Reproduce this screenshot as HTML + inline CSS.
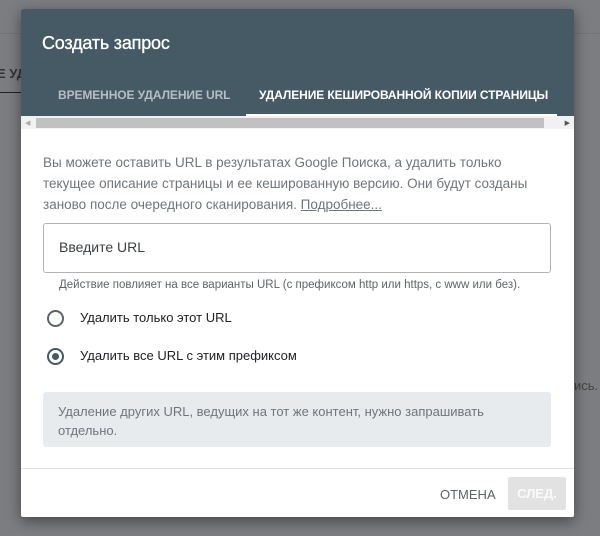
<!DOCTYPE html>
<html><head><meta charset="utf-8"><style>
body{margin:0;width:600px;height:536px;background:#7c7d80;font-family:"Liberation Sans",sans-serif;position:relative;overflow:hidden}
.bg{position:absolute;color:#2a2a2a}
.dlg{position:absolute;left:21px;top:9px;width:553px;height:508px;background:#fff;box-shadow:0 4px 14px rgba(0,0,0,.45);border-radius:2px;overflow:hidden}
.hd{background:#465a66;height:107px;position:relative}
.hd h1{margin:0;position:absolute;left:21px;top:24px;font-size:18px;font-weight:normal;color:#fff;letter-spacing:-.2px;-webkit-text-stroke:.3px #fff}
.tab{position:absolute;top:79px;font-size:12px;font-weight:bold;letter-spacing:-.1px}
.ul{position:absolute;left:225px;top:105px;width:311px;height:2px;background:#fff}
.sb{position:absolute;left:0;top:107px;width:553px;height:13px;background:#f1f1f1}
.th{position:absolute;left:15px;top:2px;width:508px;height:10px;background:#c1c1c1}
.t{position:absolute;color:#70757a}
.inp{position:absolute;left:22px;top:214px;width:506px;height:48px;border:1px solid #b0b3b7;border-radius:3px}
.rad{position:absolute;left:26px;width:13px;height:13px;border:2px solid #5f6368;border-radius:50%}
.box{position:absolute;left:22px;top:383px;width:508px;height:55px;background:#e8ebee;border-radius:3px}
</style></head><body>
<div class="bg" style="left:0;top:33px;width:600px;height:1px;background:#737477"></div>
<div class="bg" style="left:-3px;top:66px;font-size:13px;font-weight:bold;color:#333">Е УД</div>
<div class="bg" style="left:0;top:92px;width:21px;height:1px;background:#222"></div>
<div class="bg" style="left:574px;top:378px;font-size:13px;color:#444">ись.</div>
<div class="dlg">
 <div class="hd"><h1>Создать запрос</h1>
  <div class="tab" style="left:37px;color:#b4bfc5">ВРЕМЕННОЕ УДАЛЕНИЕ URL</div>
  <div class="tab" style="left:238px;color:#fff">УДАЛЕНИЕ КЕШИРОВАННОЙ КОПИИ СТРАНИЦЫ</div>
  <div class="ul"></div></div>
 <div class="sb"><div class="th"></div><div style="position:absolute;left:4px;top:3px;font-size:7px;color:#aaa">◀</div><div style="position:absolute;right:4px;top:3px;font-size:7px;color:#555">▶</div></div>
 <div class="t" style="left:22px;top:143px;width:500px;font-size:13.5px;line-height:21px">Вы можете оставить URL в результатах Google Поиска, а удалить только текущее описание страницы и ее кешированную версию. Они будут созданы заново после очередного сканирования. <u>Подробнее...</u></div>
 <div class="inp"><div style="position:absolute;left:15px;top:15px;font-size:14px;color:#3c4043">Введите URL</div></div>
 <div class="t" style="left:38px;top:270px;font-size:11.5px;color:#5f6368">Действие повлияет на все варианты URL (с префиксом http или https, с www или без).</div>
 <div class="rad" style="top:301px"></div>
 <div class="t" style="left:59px;top:301px;font-size:13px;color:#202124">Удалить только этот URL</div>
 <div class="rad" style="top:339px;border-color:#455a64"><div style="position:absolute;left:3px;top:3px;width:7px;height:7px;border-radius:50%;background:#455a64"></div></div>
 <div class="t" style="left:59px;top:339px;font-size:13px;color:#202124">Удалить все URL с этим префиксом</div>
 <div class="box"><div class="t" style="left:15px;top:10px;font-size:13px;line-height:19px;width:480px">Удаление других URL, ведущих на тот же контент, нужно запрашивать отдельно.</div></div>
 <div style="position:absolute;left:0;top:459px;width:553px;height:1px;background:#e0e0e0"></div>
 <div class="t" style="left:419px;top:478px;font-size:13px;color:#5f6368">ОТМЕНА</div>
 <div style="position:absolute;left:487px;top:468px;width:58px;height:33px;background:#e2e2e2;border-radius:2px;color:#fafafa;font-size:13px;font-weight:bold;text-align:center;line-height:33px">СЛЕД.</div>
</div>
</body></html>
